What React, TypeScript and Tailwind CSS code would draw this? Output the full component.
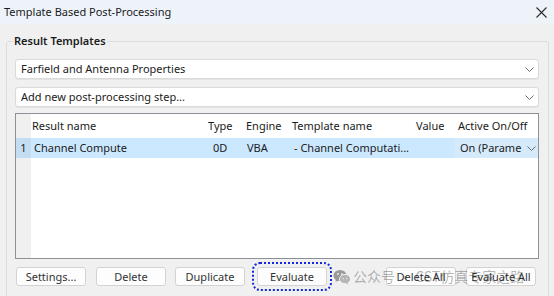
import React from "react";

const font = { fontFamily: '"Noto Sans", "Noto Sans CJK SC", sans-serif' };

function Chevron({ className = "" }: { className?: string }) {
  return (
    <svg width="9" height="5" viewBox="0 0 9 5" className={className}>
      <path d="M0.5 0.5 L4.5 4.5 L8.5 0.5" fill="none" stroke="#6b6b6b" strokeWidth="1" />
    </svg>
  );
}

function Combo({ text }: { text: string }) {
  return (
    <div className="flex h-[20px] items-center justify-between rounded-[3px] border border-[#dadada] bg-white pl-[5px] pr-[4px] text-[11px] text-[#1b1b1b] shadow-[0_1px_0_#e4e4e4]">
      <span>{text}</span>
      <Chevron />
    </div>
  );
}

function Btn({ label, focused }: { label: string; focused?: boolean }) {
  return (
    <button
      className={
        "flex h-[19px] w-[70px] shrink-0 items-center justify-center rounded-[3px] border border-[#d3d3d3] bg-[#fdfdfd] text-[11px] leading-none text-[#333] " +
        (focused ? "outline-2 outline-dotted outline-offset-[3px] outline-[#1428d8]" : "")
      }
    >
      {label}
    </button>
  );
}

function WeChat() {
  return (
    <svg width="18" height="16" viewBox="0 0 18 16">
      <ellipse cx="7" cy="6.5" rx="6.5" ry="5.5" fill="#9a9a9a" />
      <path d="M3 10 L2.5 13 L6 11 Z" fill="#9a9a9a" />
      <ellipse cx="12" cy="10" rx="5.5" ry="4.6" fill="#b4b4b4" stroke="#f0f0f0" strokeWidth="1" />
      <path d="M14.5 13.5 L15.5 15.5 L12.5 14 Z" fill="#b4b4b4" />
      <circle cx="5" cy="5" r="0.9" fill="#f0f0f0" />
      <circle cx="9" cy="5" r="0.9" fill="#f0f0f0" />
      <circle cx="10.3" cy="9.6" r="0.7" fill="#f0f0f0" />
      <circle cx="13.7" cy="9.6" r="0.7" fill="#f0f0f0" />
    </svg>
  );
}

const cols = "grid grid-cols-[15px_174px_38px_46px_124px_42px_1fr] whitespace-nowrap";

export default function App() {
  return (
    <div style={font} className="relative h-[296px] w-[554px] overflow-hidden bg-[#f0f0f0] text-[#1b1b1b]">
      {/* title bar */}
      <div className="flex h-[24px] items-center justify-between bg-[#eef3fa] pl-[4px] pr-[7px] text-[11px]">
        <span>Template Based Post-Processing</span>
        <svg width="11" height="11" viewBox="0 0 11 11">
          <path d="M0.5 0.5 L10.5 10.5 M10.5 0.5 L0.5 10.5" stroke="#2b2b2b" strokeWidth="1.1" />
        </svg>
      </div>

      {/* group box */}
      <div className="relative ml-[6px] mr-[5px] mt-[17px] h-[300px] rounded-[3px] border border-[#dcdcdc] pl-[8px] pr-[9px] pt-[17px]">
        <span className="absolute -top-[9px] left-[6px] bg-[#f0f0f0] px-[1px] text-[11px] font-semibold leading-[16px]">
          Result Templates
        </span>
        <div className="flex flex-col gap-[8px]">
          <Combo text="Farfield and Antenna Properties" />
          <Combo text="Add new post-processing step..." />
        </div>

        {/* table */}
        <div className="mt-[6px] h-[146px] overflow-hidden border border-[#8e9298] bg-white text-[11px]">
          <div className={cols + " h-[24px] items-center"}>
            <div className="h-full bg-[#f0f0f0]" />
            <div className="pl-[1px]">Result name</div>
            <div className="pl-[3px]">Type</div>
            <div className="pl-[3px]">Engine</div>
            <div className="pl-[3px]">Template name</div>
            <div className="pl-[3px]">Value</div>
            <div className="pl-[3px]">Active On/Off</div>
          </div>
          <div className={cols + " h-[20px] items-center bg-[#cce8ff]"}>
            <div className="flex h-full items-center justify-center bg-[#c3def3] text-[11px]">1</div>
            <div className="pl-[3px]">Channel Compute</div>
            <div className="pl-[8px]">0D</div>
            <div className="pl-[4px]">VBA</div>
            <div className="pl-[5px]">- Channel Computati...</div>
            <div />
            <div className="flex h-full items-center justify-between bg-[#d5ebfc] pl-[5px] pr-[2px]">
              <span>On (Parame</span>
              <Chevron />
            </div>
          </div>
          <div className="h-[100px] w-[15px] bg-[#f0f0f0]" />
        </div>

        {/* buttons */}
        <div className="mt-[8px] flex items-start pl-[1px]">
          <Btn label="Settings..." />
          <div className="ml-[10px] flex">
            <Btn label="Delete" />
          </div>
          <div className="ml-[9px] flex">
            <Btn label="Duplicate" />
          </div>
          <div className="ml-[12px] flex">
            <Btn label="Evaluate" focused />
          </div>
          <div className="flex-1" />
          <Btn label="Delete All" />
          <div className="ml-[10px] mr-[3px] flex">
            <Btn label="Evaluate All" />
          </div>
        </div>
      </div>

      {/* watermark */}
      <div className="pointer-events-none absolute left-[333px] top-[266px] flex items-center gap-[2px] whitespace-nowrap text-[14px] text-black/30">
        <WeChat />
        <span style={{ fontFamily: '"Noto Sans CJK SC", sans-serif' }}>公众号 · CST仿真专家之路</span>
      </div>
    </div>
  );
}
